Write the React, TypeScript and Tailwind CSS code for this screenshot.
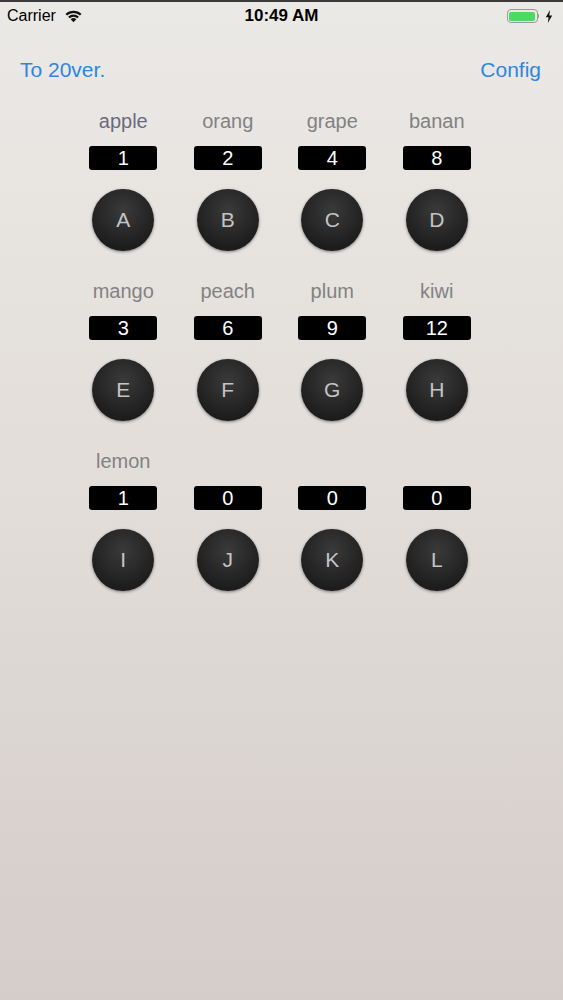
const rows = [
  [
    { label: 'apple', count: 1, key: 'A', tint: true },
    { label: 'orang', count: 2, key: 'B' },
    { label: 'grape', count: 4, key: 'C' },
    { label: 'banan', count: 8, key: 'D' },
  ],
  [
    { label: 'mango', count: 3, key: 'E' },
    { label: 'peach', count: 6, key: 'F' },
    { label: 'plum', count: 9, key: 'G' },
    { label: 'kiwi', count: 12, key: 'H' },
  ],
  [
    { label: 'lemon', count: 1, key: 'I' },
    { label: '', count: 0, key: 'J' },
    { label: '', count: 0, key: 'K' },
    { label: '', count: 0, key: 'L' },
  ],
]

function StatusBar() {
  return (
    <div className="relative flex h-[30px] items-center border-t-2 border-[#3a3a3a] px-[7px] text-[16px] text-black">
      <div className="flex items-center gap-[8px]">
        <span>Carrier</span>
        <svg width="19" height="14" viewBox="0 0 18 13">
          <path d="M9 12.5 L6.3 9.6 A4 4 0 0 1 11.7 9.6 Z" fill="#111" />
          <path d="M3.9 7.2 A7.3 7.3 0 0 1 14.1 7.2 L12.6 8.7 A5.2 5.2 0 0 0 5.4 8.7 Z" fill="#111" />
          <path d="M1.4 4.6 A10.8 10.8 0 0 1 16.6 4.6 L15.1 6.1 A8.7 8.7 0 0 0 2.9 6.1 Z" fill="#111" />
        </svg>
      </div>
      <div className="absolute left-0 right-0 text-center text-[17px] font-semibold">10:49 AM</div>
      <div className="ml-auto flex items-center gap-[6px] pr-[3px]">
        <div className="flex items-center">
          <div className="h-[14px] w-[31px] rounded-[4px] border border-[#9a9a9a] p-[1.5px]">
            <div className="h-full w-full rounded-[2px] bg-[#4cd964]" />
          </div>
          <div className="h-[4px] w-[1.5px] rounded-r bg-[#9a9a9a]" />
        </div>
        <svg width="8" height="13" viewBox="0 0 8 13">
          <path d="M5 0 L0.8 7.3 H3.6 L2.8 13 L7.2 5.4 H4.3 Z" fill="#111" />
        </svg>
      </div>
    </div>
  )
}

export default function App() {
  return (
    <div
      className="min-h-[1000px] w-full bg-gradient-to-b from-[#ebe9e6] via-[#e2ddd9] to-[#d4cdc9]"
      style={{ fontFamily: '"Liberation Sans", Arial, sans-serif' }}
    >
      <StatusBar />
      <div className="flex h-[79px] items-center justify-between px-[20px] text-[21px] text-[#2e86de]">
        <span>To 20ver.</span>
        <span className="pr-[2px]">Config</span>
      </div>
      <div className="ml-[71px] w-[418px] pt-[1px]">
        {rows.map((row, i) => (
          <div key={i} className="grid h-[170px] grid-cols-4">
            {row.map((item) => (
              <div key={item.key} className="flex flex-col items-center">
                <div className={`h-[22px] text-[20px] leading-[22px] ${item.tint ? 'text-[#6b6a7e]' : 'text-[#828282]'}`}>
                  {item.label}
                </div>
                <div className="mt-[14px] flex h-[24px] w-[68px] items-center justify-center rounded-[3px] bg-black text-[20px] leading-none text-white">
                  {item.count}
                </div>
                <div className="mt-[19px] flex h-[62px] w-[62px] items-center justify-center rounded-full bg-[radial-gradient(circle_at_50%_35%,#3a3a3a,#1e1e1e_70%,#141414)] text-[21px] text-[#c4c4c4] shadow-[0_1px_3px_rgba(0,0,0,0.45)]">
                  {item.key}
                </div>
              </div>
            ))}
          </div>
        ))}
      </div>
    </div>
  )
}
